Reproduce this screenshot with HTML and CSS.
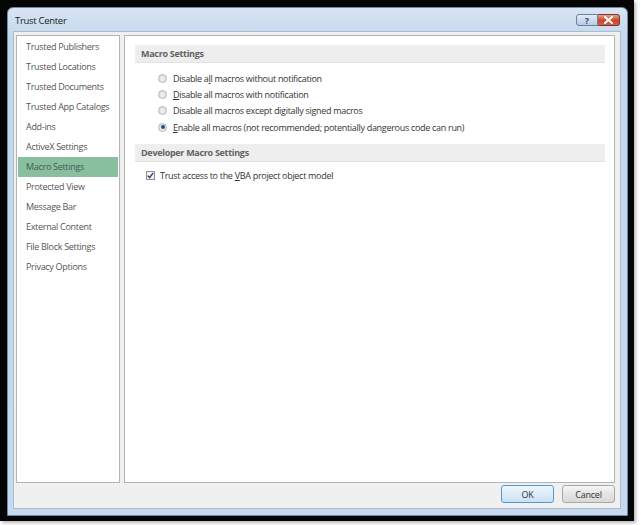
FILE: index.html
```html
<!DOCTYPE html>
<html>
<head>
<meta charset="utf-8">
<link rel="stylesheet" href="styles.css">
</head>
<body>
<div class="frame">
  <div class="window">
    <div class="titlebar">
      <span class="title">Trust Center</span>
      <div class="caption-btns">
        <div class="cbtn help">?</div>
        <div class="cbtn close">
          <svg width="9" height="8" viewBox="0 0 9 8"><path d="M1 1 L8 7 M8 1 L1 7" stroke="#fff" stroke-width="2" stroke-linecap="square"/></svg>
        </div>
      </div>
    </div>
    <div class="client">
      <div class="main">
        <ul class="nav">
          <li>Trusted Publishers</li>
          <li>Trusted Locations</li>
          <li>Trusted Documents</li>
          <li>Trusted App Catalogs</li>
          <li>Add-ins</li>
          <li>ActiveX Settings</li>
          <li class="selected">Macro Settings</li>
          <li>Protected View</li>
          <li>Message Bar</li>
          <li>External Content</li>
          <li>File Block Settings</li>
          <li>Privacy Options</li>
        </ul>
        <div class="panel">
          <div class="section-head">Macro Settings</div>
          <div class="options">
            <label class="opt"><span class="radio"></span><span>Disable a<u>l</u>l macros without notification</span></label>
            <label class="opt"><span class="radio"></span><span><u>D</u>isable all macros with notification</span></label>
            <label class="opt"><span class="radio"></span><span>Disable all macros except di<u>g</u>itally signed macros</span></label>
            <label class="opt"><span class="radio checked"></span><span><u>E</u>nable all macros (not recommended; potentially dangerous code can run)</span></label>
          </div>
          <div class="section-head">Developer Macro Settings</div>
          <div class="checks">
            <label class="opt"><span class="checkbox"><svg width="7" height="7" viewBox="0 0 7 7"><path d="M0.8 3.6 L2.6 5.6 L6.2 0.8" fill="none" stroke="#2a3f7a" stroke-width="1.4"/></svg></span><span>Trust access to the <u>V</u>BA project object model</span></label>
          </div>
        </div>
      </div>
      <div class="footer">
        <button class="btn default">OK</button>
        <button class="btn">Cancel</button>
      </div>
    </div>
  </div>
</div>
</body>
</html>
```
FILE: styles.css
```css
html, body {
  margin: 0;
  padding: 0;
  background: #ffffff;
}
body {
  width: 641px;
  height: 525px;
  overflow: hidden;
  font-family: "Open Sans", "Noto Sans", sans-serif;
  font-size: 9px;
  letter-spacing: -0.3px;
  color: #333;
}
.frame {
  width: 627px;
  height: 514px;
  padding: 7px 0 0 7px;
  background: #050505;
  box-shadow: 2px 2px 3px #bbb;
}
.window {
  width: 621px;
  height: 509px;
  box-sizing: border-box;
  background: linear-gradient(#d8e5f3, #c4d7ed 30px, #c7d9ee);
  border: 1px solid #6d8cab;
  border-radius: 6px 6px 0 0;
  display: flex;
  flex-direction: column;
  padding: 0 6px 6px 5px;
}
.titlebar {
  height: 23px;
  display: flex;
  align-items: center;
  justify-content: space-between;
  flex: none;
}
.title {
  font-size: 9.5px;
  color: #1b1b1b;
  padding-left: 2px;
  padding-top: 2px;
}
.caption-btns {
  display: flex;
  align-self: flex-start;
  margin-top: 6px;
  margin-right: 1px;
}
.cbtn {
  width: 22px;
  height: 12px;
  box-sizing: border-box;
  display: flex;
  align-items: center;
  justify-content: center;
  border: 1px solid #6b7f9a;
  font-size: 9px;
  font-weight: bold;
  line-height: 1;
  letter-spacing: 0;
}
.help {
  background: linear-gradient(#e2ebf6, #b8cbe2);
  color: #2f4a6e;
  border-radius: 3px 0 0 3px;
}
.close {
  width: 22px;
  background: linear-gradient(#e9a08c, #c9462d 55%, #d26049);
  border-color: #7b3a2e;
  border-left: none;
  border-radius: 0 3px 3px 0;
}
.client {
  flex: 1;
  background: #f0f0f0;
  border: 1px solid #a9bcd2;
  display: flex;
  flex-direction: column;
  padding: 3px 5px 4px 2px;
}
.main {
  display: flex;
  gap: 4px;
  height: 448px;
  flex: none;
}
.nav {
  list-style: none;
  margin: 0;
  padding: 1px 1px;
  width: 104px;
  box-sizing: border-box;
  background: #fff;
  border: 1px solid #b4b4b4;
  font-size: 9px;
  color: #555;
}
.nav li {
  height: 20px;
  line-height: 20px;
  padding-left: 8px;
  white-space: nowrap;
}
.nav li.selected {
  background: #88bf9f;
  color: #4a5b52;
}
.panel {
  flex: 1;
  background: #fff;
  border: 1px solid #b4b4b4;
  padding: 9px 9px 0 10px;
  box-sizing: border-box;
}
.section-head {
  height: 18px;
  line-height: 17px;
  background: #eeeeee;
  border-bottom: 1px solid #e2e2e2;
  box-sizing: border-box;
  padding-left: 6px;
  font-weight: bold;
  color: #626262;
}
.options {
  padding: 7px 0 8px 23px;
  display: flex;
  flex-direction: column;
}
.opt {
  display: flex;
  align-items: center;
  height: 16.4px;
  color: #333;
  white-space: nowrap;
}
.radio {
  width: 9px;
  height: 9px;
  box-sizing: border-box;
  border-radius: 50%;
  border: 1px solid #b7b7b7;
  background: radial-gradient(circle at 50% 60%, #f5f5f5, #d4d4d4);
  margin-right: 6px;
  flex: none;
  position: relative;
}
.radio.checked::after {
  content: "";
  position: absolute;
  left: 1.5px;
  top: 1.5px;
  width: 4px;
  height: 4px;
  border-radius: 50%;
  background: #1f4f8a;
}
.checks {
  padding: 6px 0 0 11px;
}
.checkbox {
  width: 9px;
  height: 9px;
  box-sizing: border-box;
  border: 1px solid #8f8f8f;
  background: #f4f4f4;
  margin-right: 5px;
  display: flex;
  align-items: center;
  justify-content: center;
  flex: none;
}
.footer {
  display: flex;
  justify-content: flex-end;
  gap: 8px;
  padding-top: 2px;
}
.btn {
  width: 53px;
  height: 18px;
  box-sizing: border-box;
  font-family: inherit;
  font-size: 9px;
  letter-spacing: -0.2px;
  color: #333;
  border: 1px solid #a8a8a8;
  border-radius: 3px;
  background: linear-gradient(#f6f6f6, #e4e4e4 50%, #d9d9d9);
  padding: 0;
}
.btn.default {
  border-color: #4f9ad3;
  background: linear-gradient(#eef6fc, #dcecf8 50%, #c9e1f4);
}
```
